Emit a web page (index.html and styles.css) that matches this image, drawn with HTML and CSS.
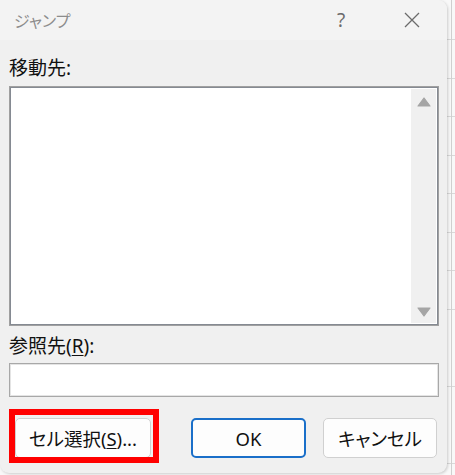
FILE: index.html
```html
<!DOCTYPE html>
<html lang="ja">
<head>
<meta charset="utf-8">
<title>ジャンプ</title>
<link rel="stylesheet" href="styles.css">
</head>
<body>
<div class="dialog">
  <div class="titlebar">
    <span class="title">ジャンプ</span>
    <span class="help">?</span>
    <span class="close">
      <svg width="16" height="16" viewBox="0 0 16 16"><path d="M1 1 L15 15 M15 1 L1 15" stroke="#6b6b6b" stroke-width="1.3" fill="none"/></svg>
    </span>
  </div>
  <div class="content">
    <div class="label first">移動先:</div>
    <div class="listbox">
      <div class="listarea"></div>
      <div class="scrollbar">
        <svg class="arrow" width="14" height="10" viewBox="0 0 14 10"><path d="M7 1 L13 9 L1 9 Z" fill="#a5a5a5" stroke="#a5a5a5" stroke-width="1.2" stroke-linejoin="round"/></svg>
        <svg class="arrow" width="14" height="10" viewBox="0 0 14 10"><path d="M1 1 L13 1 L7 9 Z" fill="#a5a5a5" stroke="#a5a5a5" stroke-width="1.2" stroke-linejoin="round"/></svg>
      </div>
    </div>
    <div class="label second">参照先(<u>R</u>):</div>
    <div class="input"></div>
    <div class="buttons">
      <div class="btn cell">セル選択(<u>S</u>)...</div>
      <div class="btn ok">OK</div>
      <div class="btn cancel">キャンセル</div>
      <div class="highlight"></div>
    </div>
  </div>
</div>
</body>
</html>
```

FILE: styles.css
```css
html, body {
  margin: 0;
  padding: 0;
}
body {
  width: 455px;
  height: 475px;
  overflow: hidden;
  background-color: #f8f8f8;
  background-image:
    linear-gradient(to right, transparent 451px, #cfcfcf 451px, #cfcfcf 452px, transparent 452px),
    repeating-linear-gradient(to bottom, transparent 0, transparent 37.5px, #d9d9d9 37.5px, #d9d9d9 38.5px);
  background-position: 0 0, 0 2px;
  font-family: "Noto Sans", "Noto Sans CJK JP", sans-serif;
  font-feature-settings: "palt";
}
.dialog {
  width: 447px;
  height: 473px;
  background: #f0f0f0;
  border-radius: 0 9px 9px 9px;
  box-shadow: 1px 1px 3px rgba(0,0,0,0.18);
  overflow: hidden;
  display: flex;
  flex-direction: column;
}
.titlebar {
  height: 40px;
  background: #f3f3f3;
  display: flex;
  align-items: center;
  flex-shrink: 0;
}
.title {
  flex: 1;
  padding-left: 14px;
  font-size: 16px;
  color: #8c8c8c;
  line-height: 20px;
  font-family: "Noto Sans CJK JP", sans-serif;
}
.help {
  width: 72px;
  text-align: center;
  font-size: 19px;
  color: #6b6b6b;
  line-height: 20px;
}
.close {
  width: 70px;
  display: flex;
  justify-content: center;
  align-items: center;
}
.content {
  padding: 0 8px 0 9px;
  position: relative;
  flex: 1;
}
.label {
  font-size: 19px;
  line-height: 24px;
  color: #111111;
}
.label u {
  text-underline-offset: 2px;
  text-decoration-thickness: 1px;
}
.label.first {
  margin-top: 16px;
}
.listbox {
  margin-top: 6px;
  height: 240px;
  box-sizing: border-box;
  border: 1px solid #a0a0a0;
  box-shadow: inset 0 0 0 1px #858a92;
  background: #ffffff;
  display: flex;
  padding: 2px;
}
.listarea {
  flex: 1;
}
.scrollbar {
  width: 25px;
  background: #f0f0f0;
  display: flex;
  flex-direction: column;
  justify-content: space-between;
  align-items: center;
  padding: 8px 0 6px;
}
.label.second {
  margin-top: 8px;
}
.input {
  margin-top: 5px;
  height: 34px;
  box-sizing: border-box;
  border: 1px solid #a8a8a8;
  box-shadow: inset 0 0 0 1px #e4e4e4;
  background: #ffffff;
}
.buttons {
  margin-top: 21px;
  display: flex;
  position: relative;
}
.btn {
  height: 40px;
  box-sizing: border-box;
  border: 1px solid #d0d0d0;
  border-radius: 5px;
  background: #fdfdfd;
  display: flex;
  align-items: center;
  justify-content: center;
  font-size: 18.5px;
  color: #111111;
}
.btn u {
  text-underline-offset: 2px;
  text-decoration-thickness: 1px;
}
.cell {
  width: 136px;
  margin-left: 6px;
}
.ok {
  width: 115px;
  margin-left: 40px;
  border: 2px solid #1a6fc9;
}
.cancel {
  width: 114px;
  margin-left: 17px;
}
.highlight {
  position: absolute;
  left: 0;
  top: -9px;
  width: 150px;
  height: 54px;
  box-sizing: border-box;
  border: 6px solid #ff0000;
}
```
